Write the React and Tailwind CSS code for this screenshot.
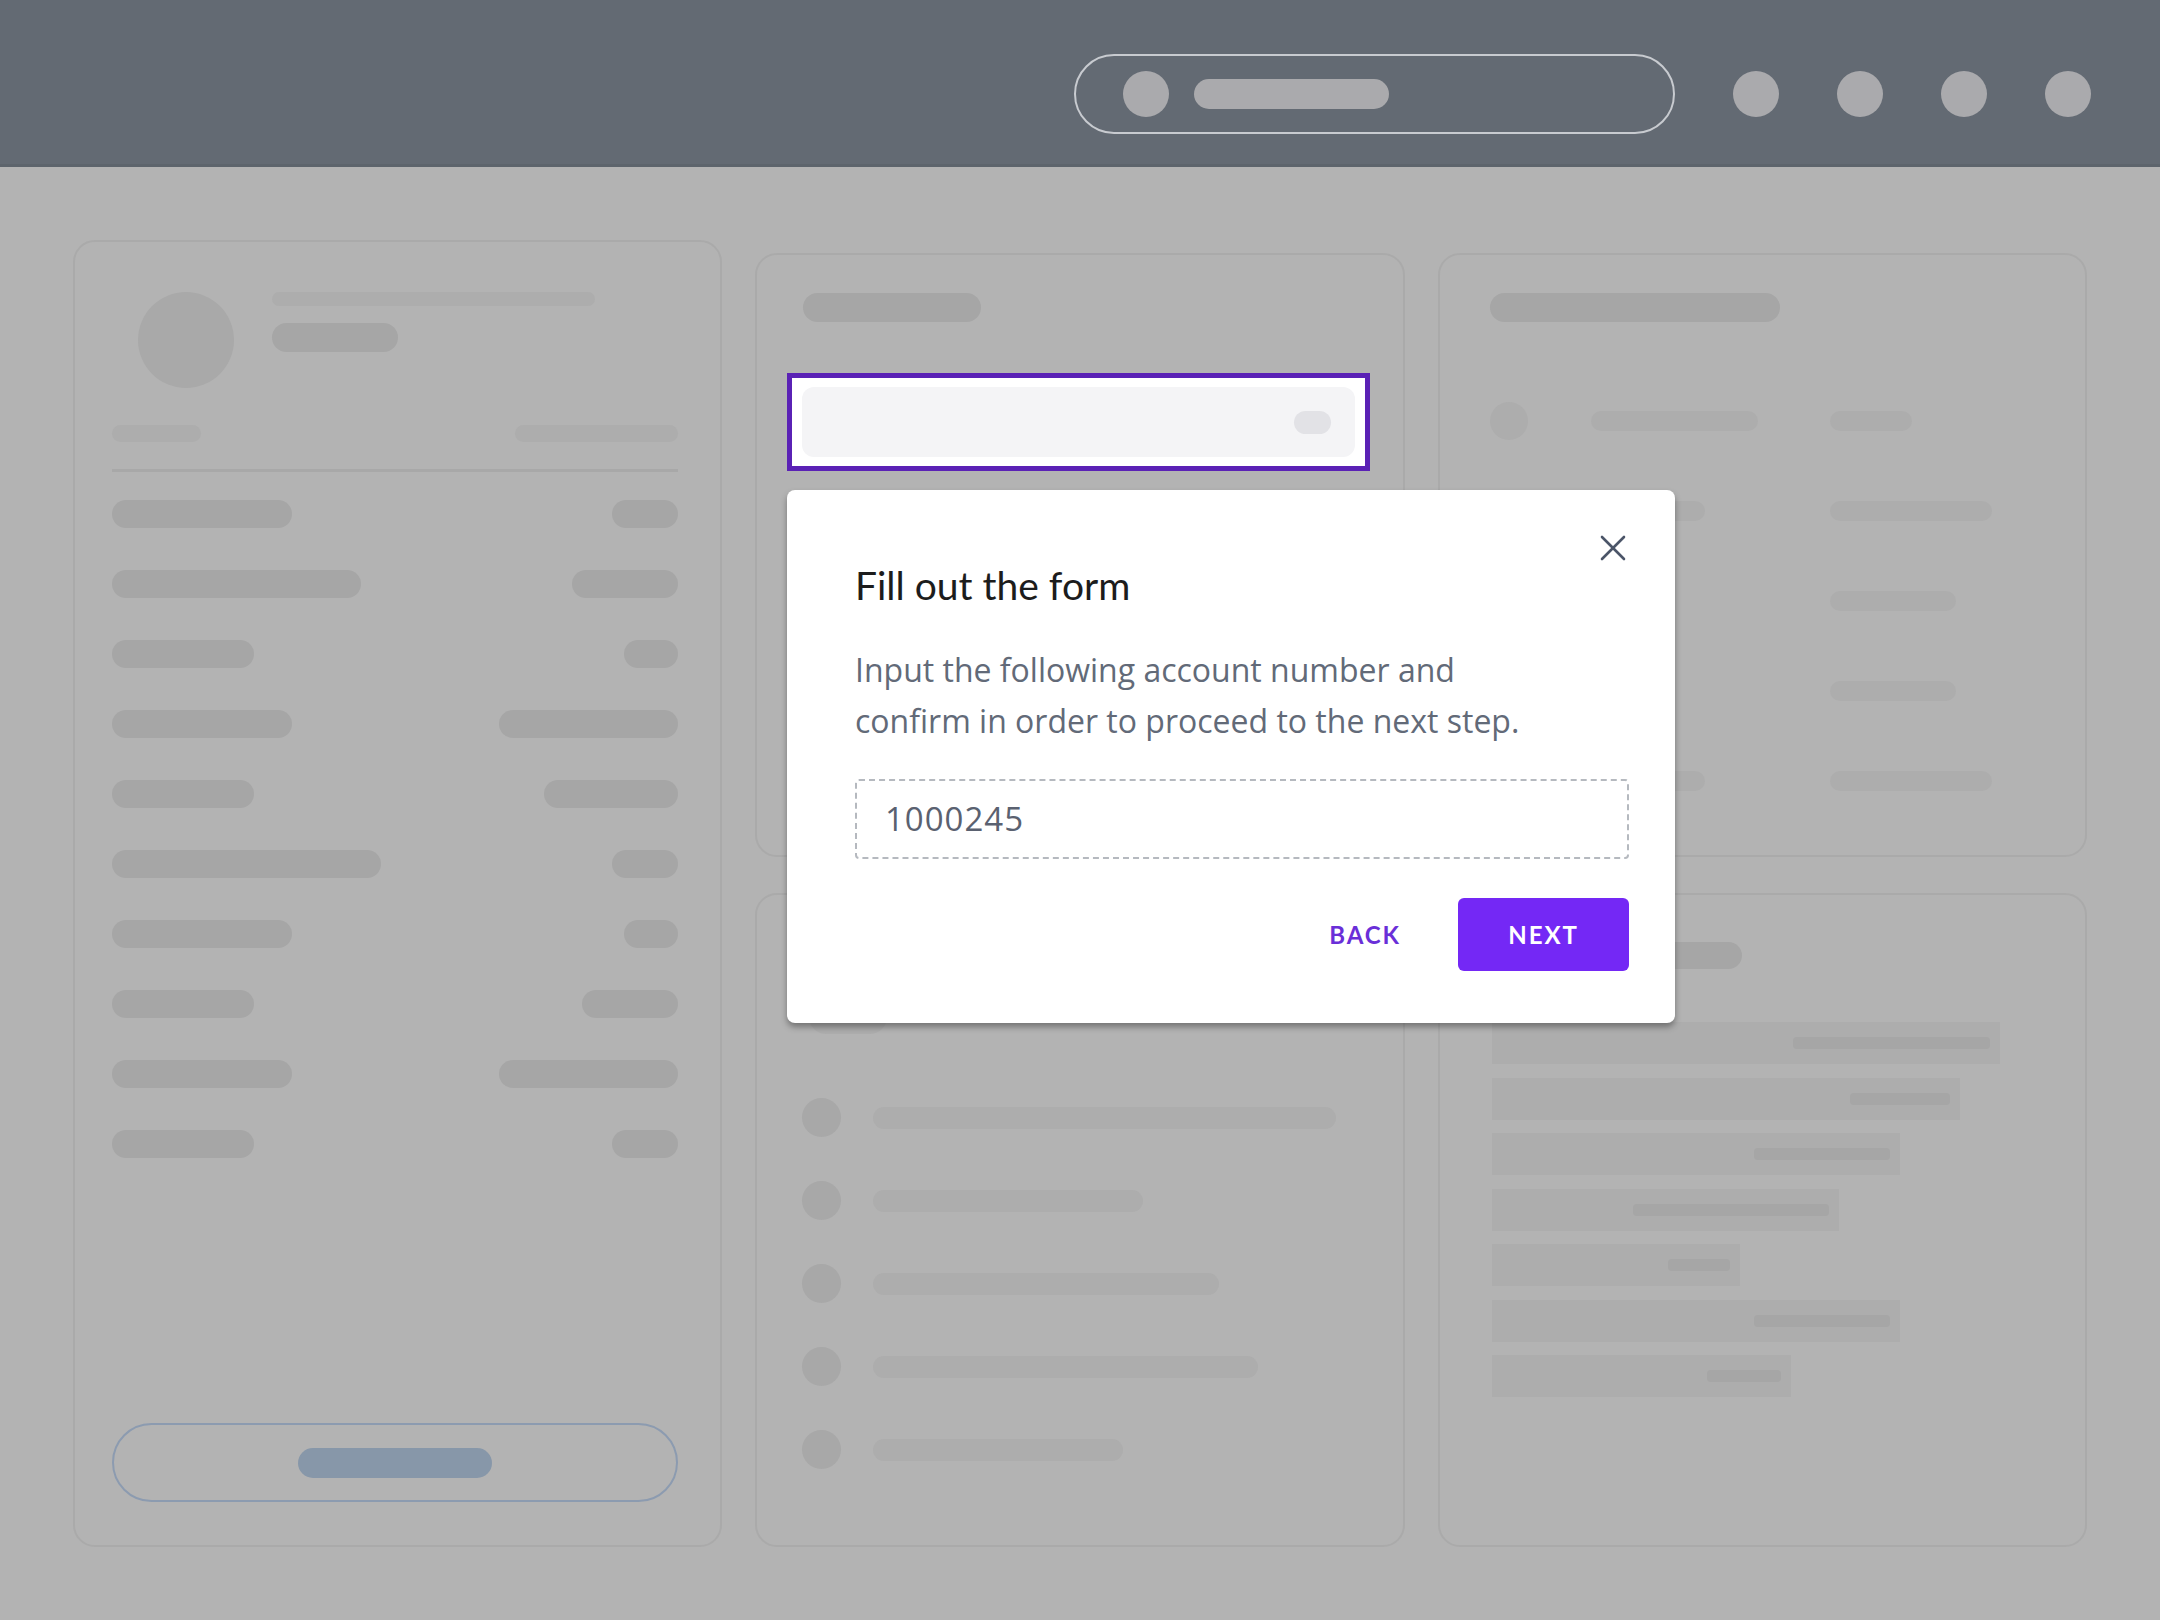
const leftRows = [
  [180, 66],
  [249, 106],
  [142, 54],
  [180, 179],
  [142, 134],
  [269, 66],
  [180, 54],
  [142, 96],
  [180, 179],
  [142, 66],
];

const listRows = [463, 270, 346, 385, 250];

const statRows = [
  [167, 82],
  [114, 162],
  [70, 126],
  [70, 126],
  [114, 162],
];

const chartRows = [
  [508, 197],
  [468, 100],
  [408, 136],
  [347, 196],
  [248, 62],
  [408, 136],
  [299, 74],
];

function Bar({ w, h = 28, tone = "dark", className = "" }) {
  return (
    <div
      className={`rounded-full ${tone === "dark" ? "bg-[#a6a6a6]" : "bg-[#adadad]"} ${className}`}
      style={{ width: w, height: h }}
    />
  );
}

function Card({ children, className = "" }) {
  return (
    <div className={`rounded-[22px] border-2 border-[#aaaaaa] bg-[#b3b3b3] ${className}`}>
      {children}
    </div>
  );
}

export default function App() {
  return (
    <div className="relative min-h-screen w-full bg-[#b3b3b3] font-[Lato,sans-serif]">
      {/* Header */}
      <header className="flex h-[167px] items-center justify-end gap-[58px] border-b-[3px] border-[#5d646c] bg-[#636a73] pr-[69px] pt-[24px]">
        <div className="flex h-[80px] w-[601px] items-center gap-[25px] rounded-full border-2 border-[#c8cbd0] pl-[47px]">
          <div className="h-[46px] w-[46px] rounded-full bg-[#aaaaad]" />
          <div className="h-[30px] w-[195px] rounded-full bg-[#aaaaad]" />
        </div>
        <div className="h-[46px] w-[46px] rounded-full bg-[#aaaaad]" />
        <div className="h-[46px] w-[46px] rounded-full bg-[#aaaaad]" />
        <div className="h-[46px] w-[46px] rounded-full bg-[#aaaaad]" />
        <div className="h-[46px] w-[46px] rounded-full bg-[#aaaaad]" />
      </header>

      {/* Dashboard skeleton */}
      <main className="grid grid-cols-3 gap-[33px] px-[73px] pt-[73px]">
        {/* Left profile card */}
        <Card className="flex h-[1307px] flex-col pb-[43px] pl-[37px] pr-[42px] pt-[50px]">
          <div className="flex items-start">
            <div className="ml-[26px] h-[96px] w-[96px] rounded-full bg-[#a9a9a9]" />
            <div className="ml-[38px] flex flex-col">
              <Bar w={323} h={14} tone="light" />
              <Bar w={126} h={29} className="mt-[17px]" />
            </div>
          </div>
          <div className="mt-[37px] flex justify-between">
            <Bar w={89} h={17} tone="light" />
            <Bar w={163} h={17} tone="light" />
          </div>
          <div className="mt-[27px] h-[3px] w-full bg-[#a8a8a8]" />
          <div className="mt-[28px] flex flex-col gap-[42px]">
            {leftRows.map(([l, r], i) => (
              <div key={i} className="flex justify-between">
                <Bar w={l} />
                <Bar w={r} />
              </div>
            ))}
          </div>
          <div className="mt-auto flex h-[79px] w-full items-center justify-center rounded-full border-2 border-[#8c9bb0]">
            <div className="h-[30px] w-[194px] rounded-full bg-[#8797a9]" />
          </div>
        </Card>

        {/* Middle column */}
        <div className="mt-[13px] flex flex-col gap-[36px]">
          <Card className="h-[604px] pt-[38px]">
            <Bar w={178} h={29} className="ml-[46px]" />
            <div className="ml-[30px] mr-[33px] mt-[51px] border-[5px] border-[#5a21b5] bg-white px-[10px] py-[9px]">
              <div className="flex h-[70px] items-center justify-end rounded-[12px] bg-[#f4f4f6] pr-[24px]">
                <div className="h-[23px] w-[37px] rounded-full bg-[#e2e2e6]" />
              </div>
            </div>
          </Card>
          <Card className="h-[654px] px-[45px] pt-[47px]">
            <Bar w={180} h={29} />
            <Bar w={78} h={34} tone="light" className="ml-[7px] mt-[29px]" />
            <div className="mt-[64px] flex flex-col gap-[44px]">
              {listRows.map((w, i) => (
                <div key={i} className="flex items-center gap-[32px]">
                  <div className="h-[39px] w-[39px] rounded-full bg-[#a8a8a8]" />
                  <Bar w={w} h={22} tone="light" />
                </div>
              ))}
            </div>
          </Card>
        </div>

        {/* Right column */}
        <div className="mt-[13px] flex flex-col gap-[36px]">
          <Card className="h-[604px] pl-[50px] pt-[38px]">
            <Bar w={290} h={29} />
            <div className="mt-[80px] flex flex-col gap-[52px]">
              {statRows.map(([a, b], i) => (
                <div key={i} className="flex h-[38px] items-center">
                  <div className="h-[38px] w-[38px] rounded-full bg-[#adadad]" />
                  <div className="ml-[63px] w-[239px]">
                    <Bar w={a} h={20} tone="light" />
                  </div>
                  <Bar w={b} h={20} tone="light" />
                </div>
              ))}
            </div>
          </Card>
          <Card className="h-[654px] pl-[52px] pt-[47px]">
            <Bar w={250} h={27} />
            <div className="mt-[53px] flex flex-col gap-[13.5px]">
              {chartRows.map(([w, inner], i) => (
                <div
                  key={i}
                  className="flex h-[42px] items-center justify-end bg-[#adadad] pr-[10px]"
                  style={{ width: w }}
                >
                  <div className="h-[12px] rounded-sm bg-[#a6a6a6]" style={{ width: inner }} />
                </div>
              ))}
            </div>
          </Card>
        </div>
      </main>

      {/* Modal */}
      <div className="absolute left-[787px] top-[490px] w-[888px] rounded-[8px] bg-white pb-[52px] pl-[68px] pr-[46px] pt-[72px] shadow-[0_4px_6px_rgba(0,0,0,0.35)]">
        <button className="absolute left-[813px] top-[45px] text-[#4b5568]">
          <svg width="26" height="26" viewBox="0 0 26 26" fill="none" stroke="currentColor" strokeWidth="2.6" strokeLinecap="round">
            <line x1="2" y1="2" x2="24" y2="24" />
            <line x1="24" y1="2" x2="2" y2="24" />
          </svg>
        </button>
        <h2 className="text-[39px] leading-[46px] font-normal text-[#1c1c1c]">Fill out the form</h2>
        <p className="mt-[36px] font-['Open_Sans',sans-serif] text-[32px] leading-[51px] text-[#626a78]">
          Input the following account number and
          <br />
          confirm in order to proceed to the next step.
        </p>
        <div className="mt-[33px] flex h-[80px] items-center rounded-[4px] border-2 border-dashed border-[#b5b9bf] pl-[28px] font-['Open_Sans',sans-serif] text-[33px] tracking-[0.03em] text-[#5a6170]">
          1000245
        </div>
        <div className="mt-[39px] flex items-center justify-end gap-[57px]">
          <button className="text-[24px] font-bold tracking-[0.08em] text-[#6a2fd8]">BACK</button>
          <button className="h-[73px] w-[171px] rounded-[6px] bg-[#7428f5] text-[24px] font-bold tracking-[0.08em] text-white">
            NEXT
          </button>
        </div>
      </div>
    </div>
  );
}
